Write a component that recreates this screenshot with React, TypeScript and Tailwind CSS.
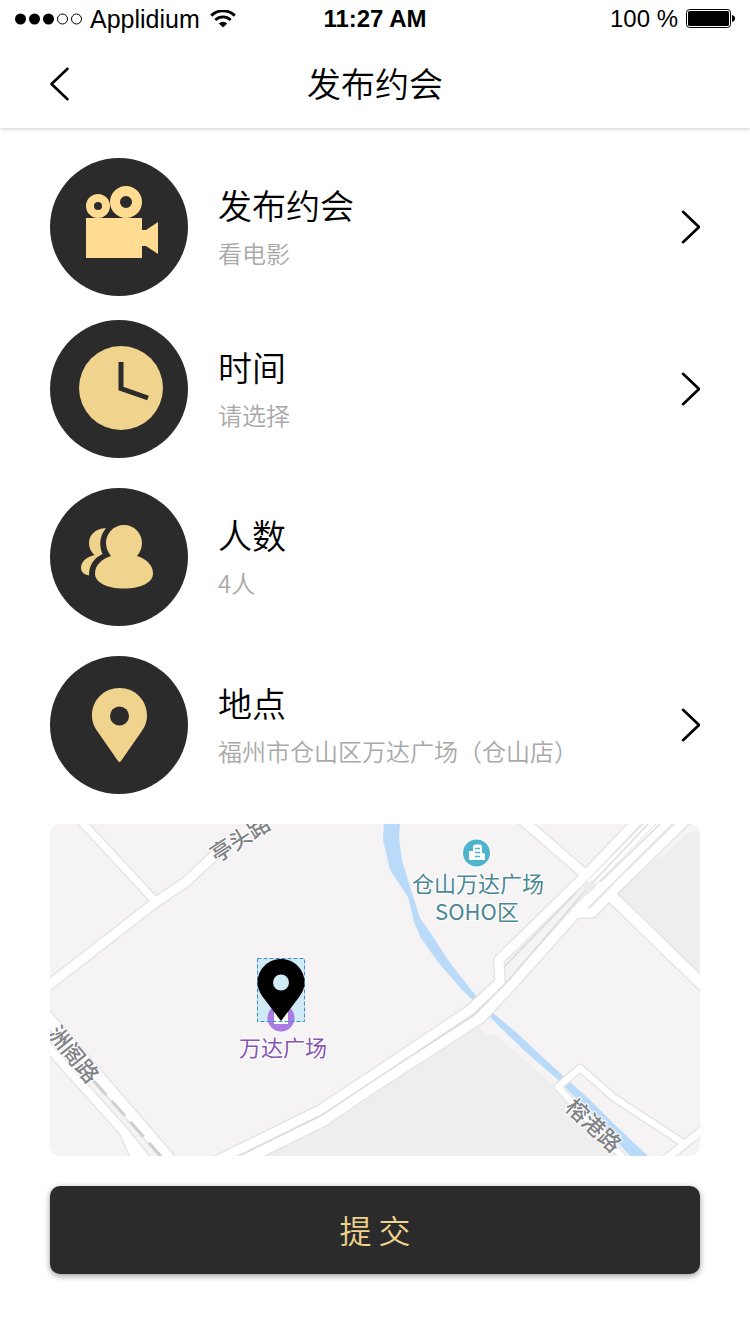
import type { ReactNode } from "react";

const CJK = "font-['Noto_Sans_CJK_SC',sans-serif]";

function StatusBar() {
  return (
    <div className="grid h-10 grid-cols-3 items-center pr-[15px] pb-[3px] pl-[15px] font-['Liberation_Sans',sans-serif] text-2xl leading-9 text-black">
      <div className="flex items-center gap-2">
        <svg className="h-3 w-[67px] shrink-0" viewBox="0 0 67 12" aria-hidden="true">
          <circle cx="5.5" cy="6" r="5.5" />
          <circle cx="19.5" cy="6" r="5.5" />
          <circle cx="33.5" cy="6" r="5.5" />
          <circle cx="47.5" cy="6" r="5" fill="none" stroke="#000" />
          <circle cx="61.5" cy="6" r="5" fill="none" stroke="#000" />
        </svg>
        <span className="text-[25px]">Applidium</span>
        <svg className="ml-0.5 h-[18px] w-[26px] shrink-0" viewBox="0 0 26 18" aria-hidden="true">
          <path d="M1.2 5.6a17 17 0 0 1 23.6 0" fill="none" stroke="#000" strokeWidth="3" />
          <path d="M5.3 9.9a11.2 11.2 0 0 1 15.4 0" fill="none" stroke="#000" strokeWidth="2.7" />
          <path d="M13 17.5 8.8 13.4a6 6 0 0 1 8.4 0z" />
        </svg>
      </div>
      <span className="text-center font-bold">11:27 AM</span>
      <div className="flex items-center justify-end gap-2">
        <span>100 %</span>
        <svg className="h-[19px] w-[49px] shrink-0" viewBox="0 0 49 19" aria-hidden="true">
          <rect x="0.5" y="0.5" width="44" height="18" rx="3" fill="none" stroke="#000" />
          <rect x="2" y="2" width="41" height="15" rx="1.5" />
          <path d="M46 6c2 .3 3 1.800 3 3.500s-1 3.200-3 3.500z" />
        </svg>
      </div>
    </div>
  );
}

function Chevron({ back = false }: { back?: boolean }) {
  return (
    <svg
      className="h-[34px] w-5 shrink-0"
      viewBox="0 0 20 34"
      fill="none"
      stroke="#000"
      strokeWidth="2.6"
      strokeLinecap="round"
      strokeLinejoin="round"
      aria-hidden="true"
    >
      <path d={back ? "M17.500 1.800 1.500 17l16 15.200" : "M3 1.800 19 17l-16 15.200"} />
    </svg>
  );
}

function CameraIcon() {
  return (
    <g fill="#ffdc91">
      <path d="M36 60h56v12h4l12-8v32l-12-8h-4v12H36z" />
      <g fill="none" stroke="#ffdc91">
        <circle cx="48" cy="48" r="8" strokeWidth="8" />
        <circle cx="76" cy="44" r="11" strokeWidth="10" />
      </g>
    </g>
  );
}

function ClockIcon() {
  return (
    <g>
      <circle cx="71" cy="68" r="42" fill="#f0d38c" />
      <path d="M71 42v26.500l27 9.500" fill="none" stroke="#2b2b2b" strokeWidth="5" />
    </g>
  );
}

function PeopleIcon() {
  return (
    <g fill="#f0d38c">
      <path d="M56 40.300C46 40 39 47 39 55c0 5 2 9 5.500 12C36 69 31 74 31 80c0 4 3 6.500 8 7.500C39 77 44 70 52.500 66 48.500 57 50 47 56 40.300z" />
      <path d="M74 37c10 0 18 8 18 18 0 5-2 9.500-5 13 10 3 16 9.500 16 17.500 0 9-12 15-29 15s-29-6-29-15C45 77 52 71 61 68c-3-3.500-5-8-5-13 0-10 8-18 18-18z" />
    </g>
  );
}

function PlaceIcon() {
  return (
    <g>
      <path
        d="M69.500 32C54 32 42 44 42 59.500c0 6.500 2 11 5.500 16l20.500 29.500q1.500 2 3 0L91.500 75.500C95 70.500 97 66 97 59.500 97 44 85 32 69.500 32z"
        fill="#f0d38c"
      />
      <circle cx="69.500" cy="60" r="9.500" fill="#2b2b2b" />
    </g>
  );
}

function Row({ icon, title, value, link = true }: { icon: ReactNode; title: string; value: string; link?: boolean }) {
  return (
    <button type="button" className="flex w-full items-center text-left">
      <svg className="size-[138px] shrink-0" viewBox="0 0 138 138" aria-hidden="true">
        <circle cx="69" cy="69" r="69" fill="#2b2b2b" />
        {icon}
      </svg>
      <span className="ml-[30px] flex min-w-0 flex-1 flex-col pt-[3px] font-[350]">
        <span className="text-[34px] leading-[48px] text-black">{title}</span>
        <span className="text-2xl leading-[48px] text-[#a9a9a9]">{value}</span>
      </span>
      {link && <Chevron />}
    </button>
  );
}

const ROADS: { d: string; w: number }[] = [
  { d: "M78 818 156 902", w: 7 },
  { d: "M40 992 156 902 186 882 220 850", w: 9 },
  { d: "M36 1034 126 1134 150 1164", w: 8 },
  { d: "M36 1004 172 1162", w: 11 },
  { d: "M124 1132 138 1164", w: 8 },
  { d: "M520 818 587 876", w: 9 },
  { d: "M608 893 710 992", w: 11 },
  { d: "M627 1162 558 1087 580 1068 613 1097 683 1143", w: 6 },
  { d: "M662 1162 710 1124", w: 7 },
  { d: "M210 1164 320 1110 370 1077 470 1010 500 982 499 960 583 878 640 818", w: 9 },
  { d: "M236 1164 323 1121 370 1089 480 1018 514 982 580 908 670 818", w: 10 },
  { d: "M572 913 592 913 618 886 690 816", w: 9 },
  { d: "M590 884 656 818", w: 8 },
];

function MapLabel({ x, y, angle, children }: { x: number; y: number; angle: number; children: string }) {
  return (
    <text
      transform={`translate(${x} ${y}) rotate(${angle})`}
      className="text-[22px] font-medium"
      fill="#808285"
      stroke="#fff"
      strokeWidth="2"
      paintOrder="stroke"
      textAnchor="middle"
      dominantBaseline="central"
    >
      {children}
    </text>
  );
}

function LocationMap() {
  return (
    <svg
      className={`${CJK} mt-[30px] block h-auto w-full rounded-[10px]`}
      viewBox="50 824 650 332"
      role="img"
      aria-label="万达广场"
    >
      <rect x="50" y="824" width="650" height="332" fill="#f5f3f4" />
      <path d="M240 1160 325 1118 475 1023 485 1034 497 1036 555 1086 628 1160z" fill="#eeeeee" />
      <path d="M617 893 653 860 662 857 686 834 700 830V982z" fill="#eeeeee" />
      <path
        d="M384 822 383 840 390 870 408 897 414 922 421 938 438 962 463 991 480 1007 505 1032 527 1053 557 1079 587 1109 632 1158H650L612 1122 588 1098 560 1073 537 1052 517 1033 487 1008 472 991 448 960 432 935 420 918 412 893 402 860 399 838 400 822z"
        fill="#badaf9"
      />
      <g fill="none" stroke="#e6e5e6" strokeLinejoin="round">
        {ROADS.map((r) => (
          <path key={r.d} d={r.d} strokeWidth={r.w + 3} />
        ))}
      </g>
      <g fill="none" stroke="#fff" strokeLinejoin="round">
        {ROADS.map((r) => (
          <path key={r.d} d={r.d} strokeWidth={r.w} />
        ))}
      </g>
      <g fill="none" stroke="#dddcdd" strokeWidth="1.500">
        <path d="M222 1164 322 1115 370 1083 474 1015 509 980 583 893" />
        <path d="M504 967 577 892M583 893 648 824M600 882 660 824" />
      </g>
      <path d="M583 886 592 880 597 885 588 895z" fill="#ececec" />
      <path d="M93 1080 168 1164" fill="none" stroke="#cfcfcf" strokeWidth="3" strokeDasharray="20 8" />

      <MapLabel x={239} y={837} angle={-33}>亭头路</MapLabel>
      <MapLabel x={75} y={1053} angle={51}>洲阁路</MapLabel>
      <MapLabel x={595} y={1124} angle={43}>榕港路</MapLabel>

      <circle cx="476.500" cy="853" r="14.500" fill="#fff" />
      <circle cx="476.500" cy="853" r="13.500" fill="#4db4cb" />
      <path d="M469 860v-9h4v-5l2-1.500h5.500l1.500 1.500v7h2l1 1.500v5.500z" fill="#fff" />
      <path d="M475 848.500h5M475 852.500h5M475 856.500h5" stroke="#4db4cb" strokeWidth="1.300" />
      <text
        className="text-[22px]"
        textAnchor="middle"
        fill="#4a8793"
        stroke="#fff"
        strokeWidth="2"
        paintOrder="stroke"
      >
        <tspan x="478" y="892">仓山万达广场</tspan>
        <tspan x="477" y="920">SOHO区</tspan>
      </text>

      <rect x="257.500" y="958.500" width="47" height="63" fill="#cfebf5" />
      <circle cx="281" cy="1018" r="13.500" fill="#a97be3" />
      <rect x="274" y="1011" width="14" height="13" fill="#fff" />
      <rect x="257.500" y="958.500" width="47" height="63" fill="none" stroke="#3f8fd0" strokeDasharray="4 2" />
      <path
        d="M281 959C268 959 257.500 969.500 257.500 982.500c0 5.500 2 9.500 5 14L281 1021l18.500-24.500c3-4.500 5-8.500 5-14C304.500 969.500 294 959 281 959z"
        fill="#000"
      />
      <circle cx="281" cy="982.500" r="8" fill="#cfebf5" />
      <text
        x="283"
        y="1056"
        className="text-[22px]"
        textAnchor="middle"
        fill="#8657b0"
        stroke="#fff"
        strokeWidth="2"
        paintOrder="stroke"
      >
        万达广场
      </text>
    </svg>
  );
}

export default function App() {
  return (
    <div className={`min-h-screen bg-white ${CJK}`}>
      <header className="bg-white shadow-[0_1px_4px_rgba(0,0,0,0.2)]">
        <StatusBar />
        <div className="grid h-[88px] grid-cols-[1fr_auto_1fr] items-center px-[50px]">
          <button type="button" aria-label="返回" className="justify-self-start">
            <Chevron back />
          </button>
          <h1 className="pb-[3px] text-[34px] leading-[48px] font-[350] text-black">发布约会</h1>
        </div>
      </header>
      <main className="px-[50px] pt-[30px] pb-[60px]">
        <div className="flex flex-col gap-[30px]">
          <div className="flex flex-col gap-6">
            <Row icon={<CameraIcon />} title="发布约会" value="看电影" />
            <Row icon={<ClockIcon />} title="时间" value="请选择" />
          </div>
          <Row icon={<PeopleIcon />} title="人数" value="4人" link={false} />
          <Row icon={<PlaceIcon />} title="地点" value="福州市仓山区万达广场（仓山店）" />
        </div>
        <LocationMap />
        <button
          type="button"
          className="mt-[30px] h-[88px] w-full rounded-[10px] bg-[#2b2b2b] pb-[3px] text-[32px] font-[350] text-[#f0d38c] shadow-[0_2px_6px_rgba(0,0,0,0.4)]"
        >
          提 交
        </button>
      </main>
    </div>
  );
}
